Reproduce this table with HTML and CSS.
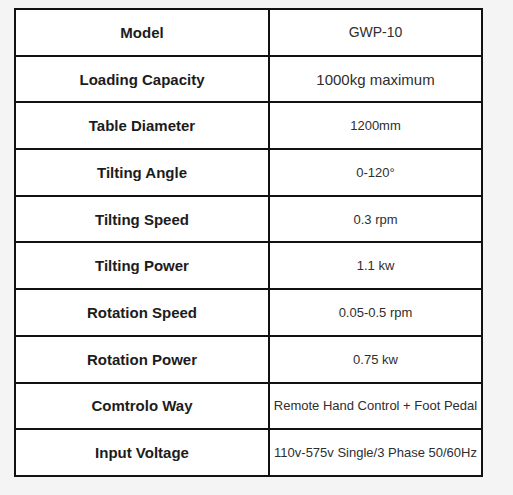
FILE: index.html
```html
<!DOCTYPE html>
<html>
<head>
<meta charset="utf-8">
<link rel="stylesheet" href="styles.css">
</head>
<body>
<table class="spec">
  <tr><td class="label">Model</td><td class="value v14">GWP-10</td></tr>
  <tr><td class="label">Loading Capacity</td><td class="value v15">1000kg maximum</td></tr>
  <tr><td class="label">Table Diameter</td><td class="value">1200mm</td></tr>
  <tr><td class="label">Tilting Angle</td><td class="value">0-120°</td></tr>
  <tr><td class="label">Tilting Speed</td><td class="value">0.3 rpm</td></tr>
  <tr><td class="label">Tilting Power</td><td class="value">1.1 kw</td></tr>
  <tr><td class="label">Rotation Speed</td><td class="value">0.05-0.5 rpm</td></tr>
  <tr><td class="label">Rotation Power</td><td class="value">0.75 kw</td></tr>
  <tr><td class="label">Comtrolo Way</td><td class="value">Remote Hand Control + Foot Pedal</td></tr>
  <tr><td class="label">Input Voltage</td><td class="value">110v-575v Single/3 Phase 50/60Hz</td></tr>
</table>
</body>
</html>
```
FILE: styles.css
```css
html, body {
  margin: 0;
  padding: 0;
  background: #f4f4f4;
}
body {
  padding: 8px 0 0 14px;
  font-family: "Liberation Sans", Arial, sans-serif;
}
.spec {
  border: 2px solid #111;
  border-spacing: 0;
  width: 469px;
  box-sizing: border-box;
  background: #fff;
  table-layout: fixed;
}
.spec td {
  height: 44.7px;
  padding: 0 2px;
  border-bottom: 2px solid #111;
  text-align: center;
  vertical-align: middle;
  box-sizing: content-box;
  white-space: nowrap;
}
.spec tr:last-child td {
  border-bottom: none;
}
.spec td.label {
  width: 248px;
  border-right: 2px solid #111;
  font-weight: bold;
  font-size: 15px;
  color: #1c1c1c;
}
.spec td.value {
  font-size: 13px;
  color: #2e2e2e;
}
.spec td.v14 { font-size: 14px; }
.spec td.v15 { font-size: 15px; }
```
